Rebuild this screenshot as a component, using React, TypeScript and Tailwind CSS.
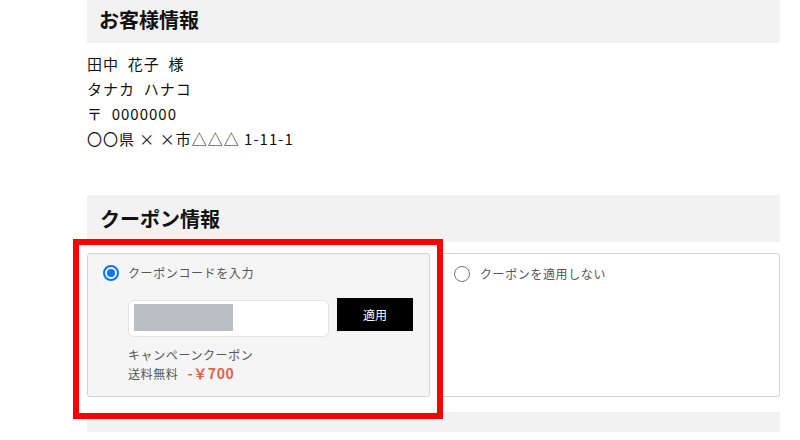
import React from "react";

const Radio: React.FC<{ checked?: boolean }> = ({ checked }) =>
  checked ? (
    <span className="w-[16px] h-[16px] rounded-full border-2 border-[#0a75f5] flex items-center justify-center shrink-0">
      <span className="w-[8px] h-[8px] rounded-full bg-[#0a75f5]" />
    </span>
  ) : (
    <span className="w-[16px] h-[16px] rounded-full border border-[#767676] bg-white shrink-0" />
  );

export default function App() {
  return (
    <div className="w-[800px] h-[440px] overflow-hidden bg-white text-[#111] font-['Noto_Sans_CJK_JP','Noto_Sans',sans-serif]">
      <div className="ml-[87px] w-[693px]">
        <section className="-mt-[4px]">
          <h2 className="h-[47px] bg-[#f2f2f2] pl-[12px] flex items-center text-[20px] font-bold">お客様情報</h2>
          <div className="mt-[8px] text-[15px] leading-[25px] tracking-[1px]">
            <p>田中&nbsp; 花子&nbsp; 様</p>
            <p>タナカ&nbsp; ハナコ</p>
            <p>〒&nbsp; 0000000</p>
            <p>〇〇県 × ×市△△△ 1-11-1</p>
          </div>
        </section>

        <section className="mt-[44px] relative">
          <h2 className="h-[47px] bg-[#f2f2f2] pl-[13px] flex items-center text-[20px] font-bold">クーポン情報</h2>
          <div className="mt-[11px] grid grid-cols-2 gap-[7px]">
            <div className="h-[144px] rounded-[3px] border border-[#d3d3d3] bg-[#f5f5f5] pl-[15px] pt-[11px]">
              <div className="h-[16px] flex items-center gap-[9px]">
                <Radio checked />
                <span className="text-[12px] tracking-[0.05em] text-[#555]">クーポンコードを入力</span>
              </div>
              <div className="mt-[17px] ml-[25px] flex items-start gap-[8px]">
                <div className="mt-[2px] w-[201px] h-[37px] rounded-[6px] border border-[#e1e1e8] bg-white p-[3px] pl-[5px]">
                  <div className="w-[99px] h-[27px] bg-[#bdbdc4]" />
                </div>
                <button className="w-[76px] h-[33px] bg-black text-white text-[12px]">適用</button>
              </div>
              <div className="mt-[8px] ml-[25px] text-[12px] leading-[19px] tracking-[0.05em] text-[#555]">
                <p>キャンペーンクーポン</p>
                <p className="flex items-center gap-[9px]">
                  <span>送料無料</span>
                  <span className="text-[14px] font-bold text-[#e5604e]">-￥700</span>
                </p>
              </div>
            </div>
            <div className="h-[144px] rounded-[3px] border border-[#d3d3d3] bg-white pl-[16px] pt-[12px]">
              <div className="h-[16px] flex items-center gap-[10px]">
                <Radio />
                <span className="text-[12px] tracking-[0.05em] text-[#555]">クーポンを適用しない</span>
              </div>
            </div>
          </div>
          <div className="absolute left-[-14px] top-[44px] w-[370px] h-[180px] border-[6px] border-[#ff0000]" />
        </section>

        <div className="mt-[15px] h-[20px] bg-[#f2f2f2]" />
      </div>
    </div>
  );
}
